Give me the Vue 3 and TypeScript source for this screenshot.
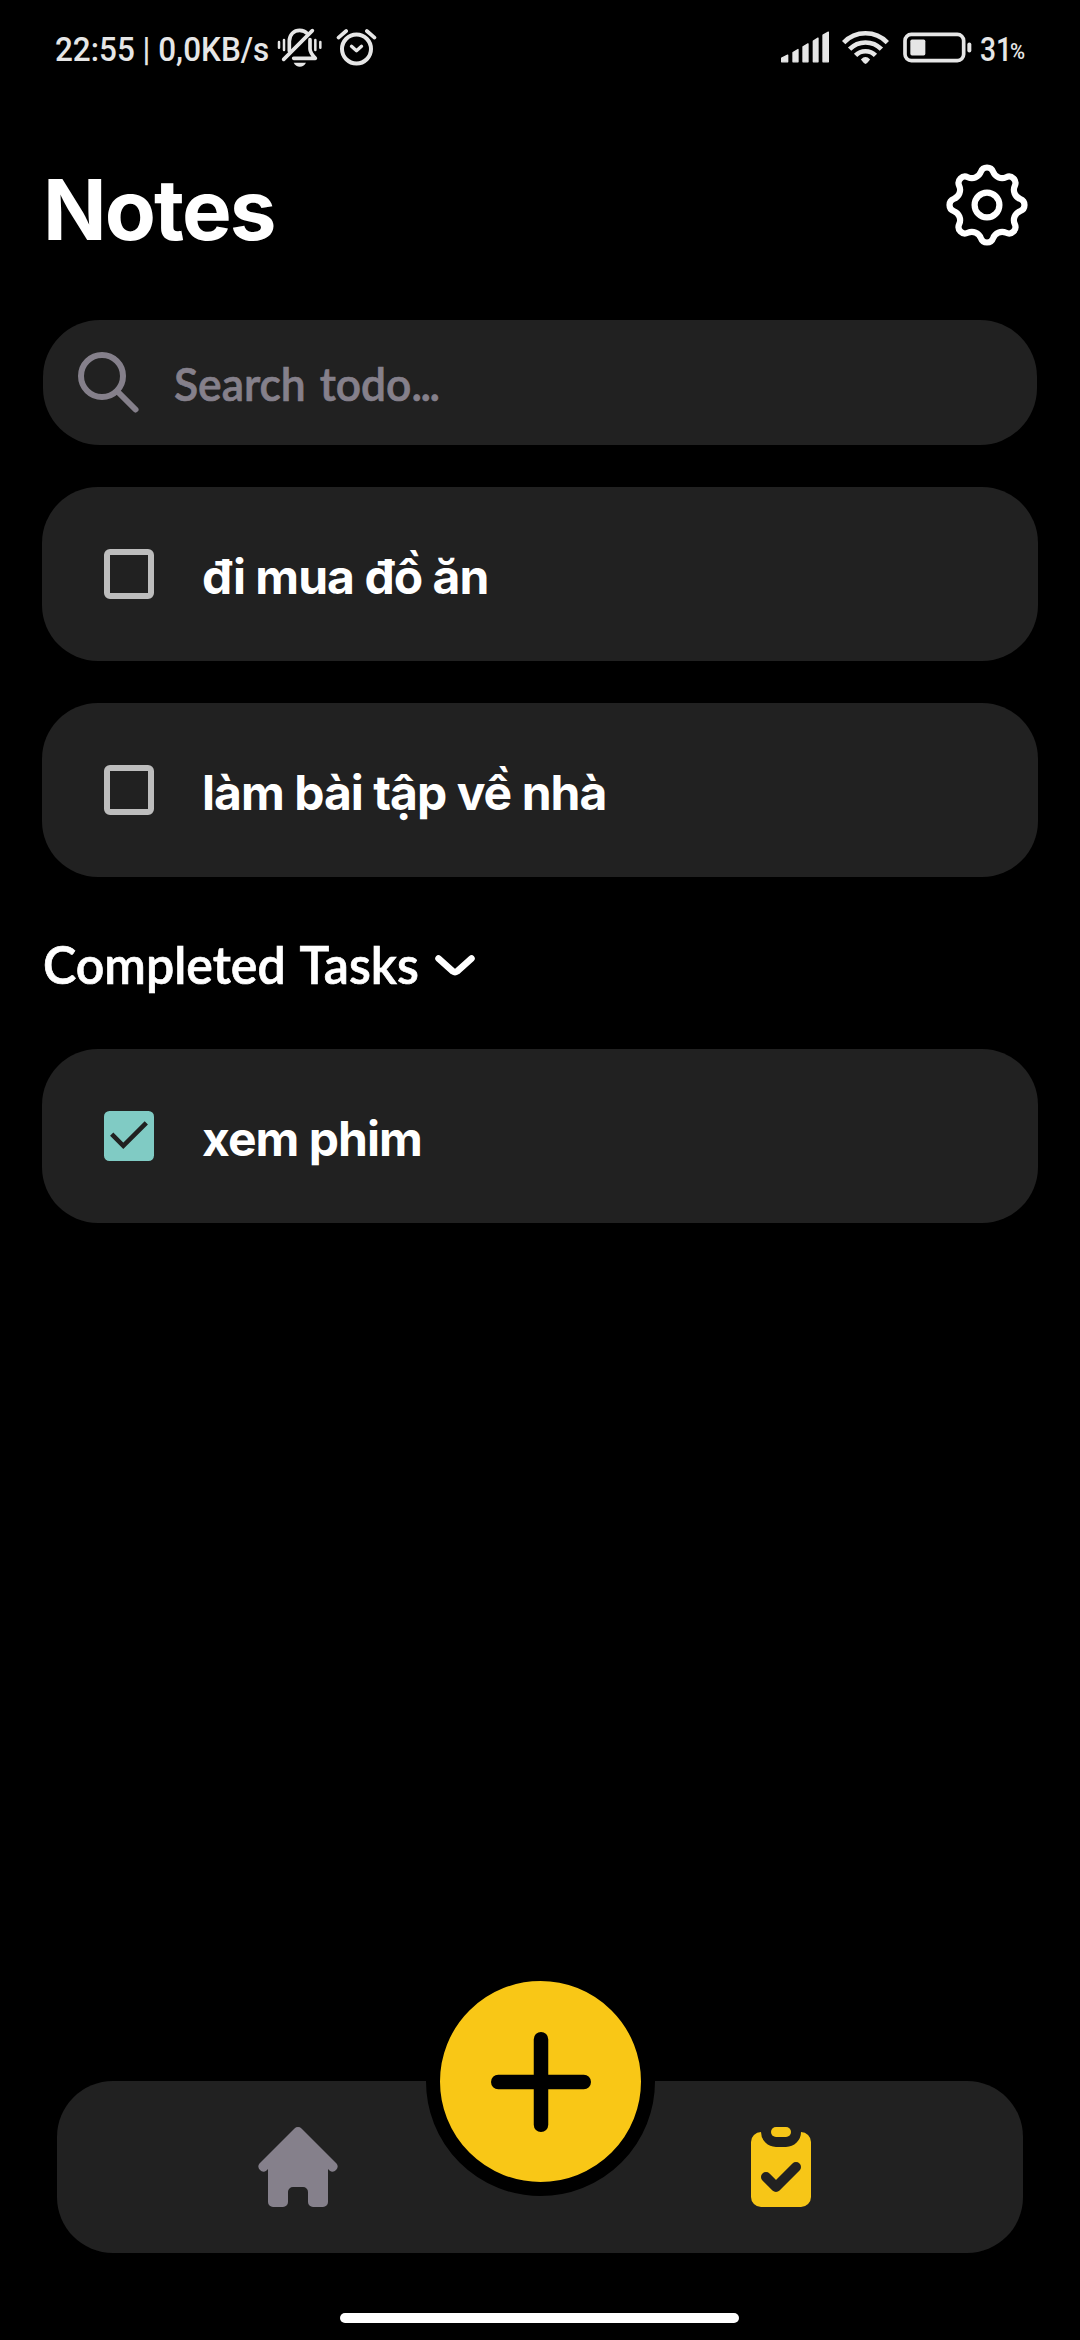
<script setup lang="ts">
interface Todo { id: number; title: string; done: boolean }

const todos: Todo[] = [
  { id: 1, title: 'đi mua đồ ăn', done: false },
  { id: 2, title: 'làm bài tập về nhà', done: false },
  { id: 3, title: 'xem phim', done: true },
]
const open = todos.filter((t) => !t.done)
const completed = todos.filter((t) => t.done)

// Eight-lobed gear outline built from tangent arcs.
function gearPath(): string {
  const lobeDist = 31
  const lobeR = 6.5
  const dipDist = 39.5
  const at = (dist: number, deg: number) => {
    const a = ((deg - 90) * Math.PI) / 180
    return { x: dist * Math.cos(a), y: dist * Math.sin(a) }
  }
  let d = ''
  let dipR = 0
  for (let i = 0; i < 8; i++) {
    const lobe = at(lobeDist, i * 45)
    const edge = (deg: number) => {
      const dip = at(dipDist, deg)
      const len = Math.hypot(dip.x - lobe.x, dip.y - lobe.y)
      dipR = len - lobeR
      const k = lobeR / len
      return `${(lobe.x + (dip.x - lobe.x) * k).toFixed(2)} ${(lobe.y + (dip.y - lobe.y) * k).toFixed(2)}`
    }
    const start = edge(i * 45 - 22.5)
    const end = edge(i * 45 + 22.5)
    d += i === 0 ? `M${start}` : `A${dipR.toFixed(2)} ${dipR.toFixed(2)} 0 0 0 ${start}`
    d += `A${lobeR} ${lobeR} 0 0 1 ${end}`
    if (i === 7) d += `A${dipR.toFixed(2)} ${dipR.toFixed(2)} 0 0 0 ${d.slice(1, d.indexOf('A'))}Z`
  }
  return d
}
const gear = gearPath()
</script>

<template>
  <div class="page">
    <header class="status">
      <span class="clock"><span class="squeeze">22:55 | 0,0KB/s</span></span>
      <svg class="bell" viewBox="712 55 138 120" fill="none" stroke="#e6e6e6" stroke-width="11" stroke-linecap="round">
        <path d="M749 124V95C749 74 763 62 780 62C790 62 798 66 803 72" />
        <path d="M732 149L818 63" />
        <path d="M811 90V118C811 128 816 134 827 146H762" stroke-linejoin="round" />
        <path d="M762 159H799C795 167 788 171 780.500 171C773 171 766 167 762 159Z" fill="#e6e6e6" stroke="none" />
        <path d="M718 97V114M733 91V121M827 91V121M842 97V114" stroke-width="7.500" />
      </svg>
      <svg class="alarm" viewBox="889 53 122 114" fill="none" stroke="#e6e6e6" stroke-linecap="round" stroke-linejoin="round">
        <circle cx="950" cy="116" r="43.500" stroke-width="12" />
        <path d="M935 108L950 121L965 108" stroke-width="10" />
        <path d="M896 82L919 62M981 62L1004 82" stroke-width="11" />
      </svg>
      <div class="grow"></div>
      <svg class="signal" viewBox="63 62 144 98" fill="#e6e6e6" stroke="#e6e6e6" stroke-width="4" stroke-linejoin="round">
        <path d="M65 146L83 137V157H65ZM99 129L114 120V157H99ZM129 112L144 103V157H129ZM160 95L174 86V157H160ZM189 77L205 68V157H189Z" />
      </svg>
      <svg class="wifi" viewBox="244 60 142 104" fill="none" stroke="#e6e6e6" stroke-width="14">
        <path d="M249 97A92 92 0 0 1 381 97" />
        <path d="M267 117A67 67 0 0 1 363 117" />
        <path d="M285 136A42 42 0 0 1 345 136" />
        <path d="M301 148Q315 134 329 148L320 159Q315 164 310 159Z" fill="#e6e6e6" stroke="none" />
      </svg>
      <svg class="battery" viewBox="428 65 207 92">
        <rect x="434" y="71.500" width="176" height="79" rx="19" fill="none" stroke="#e6e6e6" stroke-width="11" />
        <rect x="450" y="87" width="45" height="48" rx="5" fill="#e6e6e6" />
        <rect x="621" y="96" width="12" height="30" rx="6" fill="#e6e6e6" />
      </svg>
      <span class="charge"><span class="num">31</span><span class="pct">%</span></span>
    </header>

    <div class="titlebar">
      <h1>Notes</h1>
      <svg class="gear" viewBox="-42 -42 84 84" fill="none" stroke="#fff" stroke-width="6.200">
        <path :d="gear" />
        <circle r="12.400" />
      </svg>
    </div>

    <div class="search">
      <svg class="lens" viewBox="0 0 64 64" fill="none" stroke="#85808b" stroke-width="6" stroke-linecap="round">
        <circle cx="25" cy="25" r="21" />
        <path d="M40.500 40.500L58.500 58.500" />
      </svg>
      <span class="hint">Search todo<span class="dots">...</span></span>
    </div>

    <div v-for="t in open" :key="t.id" class="card">
      <span class="box"></span>
      <span class="task">{{ t.title }}</span>
    </div>

    <div class="section">
      <h2>Completed Tasks</h2>
      <svg class="chevron" viewBox="0 0 42 24" fill="none" stroke="#fff" stroke-width="6.500" stroke-linecap="round" stroke-linejoin="round">
        <path d="M4.500 4.500L19 17.500Q21 19 23 17.500L37.500 4.500" />
      </svg>
    </div>

    <div v-for="t in completed" :key="t.id" class="card">
      <svg class="tick" viewBox="0 0 50 50">
        <rect width="50" height="50" rx="5.500" fill="#80cbc4" />
        <path d="M7.700 23.200L19.300 34.800L42.300 11.800" fill="none" stroke="#212121" stroke-width="4.600" />
      </svg>
      <span class="task">{{ t.title }}</span>
    </div>

    <div class="grow"></div>

    <nav class="tabs">
      <svg class="home" viewBox="0 0 80 80" fill="#85808b">
        <path d="M36.500 1.500a5 5 0 0 1 7 0L78.500 36.500a5 5 0 0 1-7 7L70 42V75a5 5 0 0 1-5 5H55a5 5 0 0 1-5-5V65a5 5 0 0 0-5-5H35a5 5 0 0 0-5 5V75a5 5 0 0 1-5 5H15a5 5 0 0 1-5-5V42L8.500 43.500a5 5 0 0 1-7-7Z" />
      </svg>
      <svg class="clip" viewBox="0 0 60 80" fill="#f7c617">
        <path d="M10 5A10 10 0 0 0 0 15V70a10 10 0 0 0 10 10H50a10 10 0 0 0 10-10V15A10 10 0 0 0 50 5A15 15 0 0 1 35 20H25A15 15 0 0 1 10 5Z" />
        <rect x="20" width="20" height="10" rx="5" />
        <path d="M15 50L25 60L45 40" fill="none" stroke="#212121" stroke-width="10" stroke-linecap="round" stroke-linejoin="round" />
      </svg>
      <button class="add" aria-label="Add">
        <svg viewBox="0 0 100 100" stroke="#000" stroke-width="14.500" stroke-linecap="round">
          <path d="M50 7.250V92.750M7.250 50H92.750" />
        </svg>
      </button>
    </nav>
    <div class="handle"></div>
  </div>
</template>

<style>
body { background: #000; }
</style>

<style scoped>
.page {
  box-sizing: border-box;
  width: 1080px;
  height: 2340px;
  display: flex;
  flex-direction: column;
  overflow: hidden;
  background: #000;
  color: #fff;
  font-family: Inter, "Liberation Sans", sans-serif;
}
.page svg { display: block; flex: none; }
.grow { flex: 1; }
.status {
  display: flex;
  align-items: flex-start;
  height: 137px;
  padding: 0 55px;
  box-sizing: border-box;
  color: #e6e6e6;
  font-family: Roboto, "Liberation Sans", sans-serif;
}
.clock { width: 222px; margin-top: 29px; font-size: 34px; line-height: 40px; font-weight: 500; white-space: nowrap; }
.squeeze { display: inline-block; transform-origin: left; transform: scaleX(0.925); }
.bell { width: 46px; height: 40px; margin-top: 28px; }
.alarm { width: 41px; height: 38px; margin: 28px 0 0 13px; }
.signal { width: 48px; height: 33px; margin-top: 30px; }
.wifi { width: 47px; height: 35px; margin: 30px 0 0 13px; }
.battery { width: 69px; height: 31px; margin: 32px 0 0 14px; }
.charge { display: flex; width: 45px; margin: 29px 0 0 8px; line-height: 40px; font-weight: 500; }
.num { width: 30px; font-size: 34px; transform-origin: left; transform: scaleX(0.83); }
.pct { font-size: 22px; transform-origin: left; transform: scaleX(0.93); padding-top: 3px; }

.titlebar { display: flex; justify-content: space-between; align-items: flex-start; height: 183px; padding: 0 51px 0 43px; flex: none; }
h1 { margin: 23px 0 0; font-size: 83.500px; line-height: 100px; font-weight: 700; letter-spacing: -1.900px; }
.gear { width: 84px; height: 84px; margin-top: 26px; }

.search {
  display: flex;
  flex: none;
  box-sizing: border-box;
  height: 125px;
  margin: 0 43px 42px;
  padding: 31px 34px;
  border-radius: 57px;
  background: #212121;
}
.lens { width: 64px; height: 64px; }
.hint {
  margin: -1px 0 0 33px;
  font: 600 47px/66px Lato, "Liberation Sans", sans-serif;
  color: #85808b;
  word-spacing: 3px;
  white-space: nowrap;
  -webkit-text-stroke: 0.700px #85808b;
  transform-origin: left;
  transform: scaleX(0.944);
}
.dots { letter-spacing: -1.500px; }

.card {
  display: flex;
  flex: none;
  align-items: center;
  box-sizing: border-box;
  height: 174px;
  margin: 0 42px 42px;
  padding: 0 62px;
  border-radius: 56px;
  background: #212121;
}
.box { box-sizing: border-box; width: 50px; height: 50px; border: 6px solid #bdbdbd; border-radius: 6px; }
.tick { width: 50px; height: 50px; }
.task { margin-left: 48px; padding-top: 5px; font-size: 48px; line-height: 60px; font-weight: 700; letter-spacing: -0.970px; white-space: nowrap; }

.section { display: flex; flex: none; align-items: flex-start; height: 130px; padding-left: 43px; }
h2 {
  margin: 14px 0 0;
  width: 391px;
  white-space: nowrap;
  font: 600 52px/62px Lato, "Liberation Sans", sans-serif;
  word-spacing: 3px;
  -webkit-text-stroke: 0.700px #fff;
  transform-origin: left;
  transform: scaleX(0.963);
}
.chevron { width: 42px; height: 24px; margin-top: 35px; }

.tabs {
  position: relative;
  display: flex;
  flex: none;
  justify-content: space-between;
  box-sizing: border-box;
  height: 172px;
  margin: 0 57px 60px;
  padding: 46px 212px 0 201px;
  border-radius: 56px;
  background: #212121;
}
.home { width: 80px; height: 80px; }
.clip { width: 60px; height: 80px; }
.add {
  position: absolute;
  left: 369px;
  top: -114px;
  display: flex;
  align-items: center;
  justify-content: center;
  box-sizing: border-box;
  width: 229px;
  height: 229px;
  padding: 0;
  border: 14px solid #000;
  border-radius: 50%;
  background: #f9c716;
}
.add svg { width: 100px; height: 100px; }
.handle { flex: none; width: 399px; height: 10px; margin: 0 0 17px 340px; border-radius: 5px; background: #fff; }
</style>
